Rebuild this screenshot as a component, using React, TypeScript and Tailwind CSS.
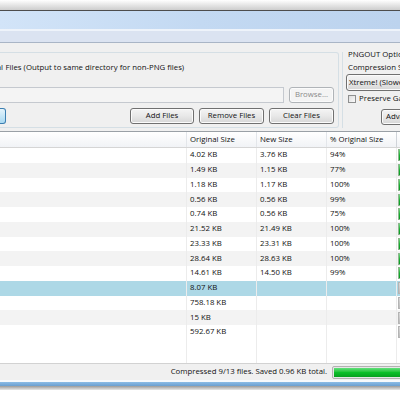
const rows: [string, string, string, boolean][] = [
  ['4.02 KB', '3.76 KB', '94%', true],
  ['1.49 KB', '1.15 KB', '77%', true],
  ['1.18 KB', '1.17 KB', '100%', true],
  ['0.56 KB', '0.56 KB', '99%', true],
  ['0.74 KB', '0.56 KB', '75%', true],
  ['21.52 KB', '21.49 KB', '100%', true],
  ['23.33 KB', '23.31 KB', '100%', true],
  ['28.64 KB', '28.63 KB', '100%', true],
  ['14.61 KB', '14.50 KB', '99%', true],
  ['8.07 KB', '', '', false],
  ['758.18 KB', '', '', false],
  ['15 KB', '', '', false],
  ['592.67 KB', '', '', false],
];

function Button({ children, className = '' }: { children?: React.ReactNode; className?: string }) {
  return (
    <div
      className={`flex h-[16px] shrink-0 items-center justify-center rounded-[3px] border border-[#707070] bg-gradient-to-b from-[#f4f4f4] via-[#e8e8e8] to-[#d6d6d6] shadow-[inset_0_0_0_1px_#fbfbfb] ${className}`}
    >
      {children}
    </div>
  );
}

export default function App() {
  return (
    <div className="h-[400px] w-[400px] overflow-hidden bg-white font-['Open_Sans',sans-serif] text-[7.8px] leading-none text-[#111]">
      {/* window frame */}
      <div className="h-[10px] bg-gradient-to-b from-white to-[#cdcdcd]" />
      <div className="h-px bg-[#4d4d4d]" />
      <div className="h-[18px] bg-gradient-to-r from-[#d2e4f8] via-[#c3d9f2] to-[#bcd3ee]" />
      <div className="h-[2px] bg-[#eef3fa]" />
      <div className="h-[11px] bg-[#dbe3f1]" />
      <div className="h-px bg-[#a9b5c6]" />

      <div className="bg-[#f0f0f0]">
        {/* options panel */}
        <div className="flex h-[88px] pt-[9px]">
          <div className="flex h-[76px] w-[339px] shrink-0 flex-col rounded-tr-[3px] rounded-br-[3px] border-y border-r border-[#d5dfe5] pr-[4px]">
            <div className="mt-[10px] flex h-[9px] items-center whitespace-nowrap">
              <div className="flex w-[3px] justify-end">
                <span>Overwrite Original</span>
              </div>
              <span className="ml-[2.5px]">Files (Output to same directory for non-PNG files)</span>
            </div>
            <div className="mt-[15px] flex h-[16px] gap-[5px]">
              <div className="h-[16px] w-[284px] border-y border-r border-[#c5c9cf] bg-[#f4f4f4]" />
              <Button className="w-[45px] border-[#b0b4b8] bg-none bg-[#f4f4f4] text-[#8a8a8a]">Browse...</Button>
            </div>
            <div className="mt-[5px] flex h-[16px] gap-[5px]">
              <div className="h-[16px] w-[6px] rounded-r-[3px] border-y border-r border-[#3c7fb1] bg-gradient-to-b from-[#e5f4fc] to-[#a9d9f2]" />
              <div className="flex-1" />
              <Button className="w-[64px]">Add Files</Button>
              <Button className="w-[65px]">Remove Files</Button>
              <Button className="w-[65px]">Clear Files</Button>
            </div>
          </div>
          <div className="ml-[3px] flex h-[76px] w-[120px] shrink-0 flex-col whitespace-nowrap border-l border-[#d5dfe5] pl-[3px]">
            <div className="-mt-[1px] ml-[2px] h-[9px]">PNGOUT Options</div>
            <div className="mt-[4px] ml-[2px] h-[9px]">Compression Strategy:</div>
            <Button className="mt-[1px] h-[17px] w-[90px] justify-start pl-[2px]">Xtreme! (Slowest)</Button>
            <div className="mt-[4px] flex items-center gap-[3px] pl-[2px]">
              <div className="h-[8px] w-[8px] border border-[#8e8f8f] bg-gradient-to-br from-[#dcdcdc] to-[#fbfbfb]" />
              <span>Preserve Gamma</span>
            </div>
            <div className="mt-[6px] flex pl-[35px]">
              <Button className="w-[60px] justify-start pl-[4px]">Advanced...</Button>
            </div>
          </div>
        </div>

        {/* file list */}
        <div className="h-[232px] border-t border-[#9aa0a6] bg-white">
          <div className="grid h-[16px] grid-cols-[187px_70px_70px_70px_1fr] border-b border-[#d5d5d5] bg-gradient-to-b from-white to-[#f1f3f6]">
            <div className="border-r border-[#e3e6ea]" />
            <div className="flex items-center border-r border-[#e3e6ea] pl-[3px]">Original Size</div>
            <div className="flex items-center border-r border-[#e3e6ea] pl-[3px]">New Size</div>
            <div className="flex items-center border-r border-[#d0d4d9] pl-[3px]">% Original Size</div>
            <div className="flex items-center pl-[3px]">Progress</div>
          </div>
          {rows.map(([orig, next, pct, done], i) => {
            const selected = i === 9;
            const bg = selected ? 'bg-[#add8e6]' : i % 2 === 1 ? 'bg-[#f3f3f3]' : 'bg-white';
            return (
              <div key={i} className={`grid h-[14.75px] grid-cols-[187px_70px_70px_70px_1fr] ${bg}`}>
                <div className="border-r border-[#ececec]" />
                <div className="flex items-center border-r border-[#ececec] pl-[3px]">{orig}</div>
                <div className="flex items-center border-r border-[#ececec] pl-[3px]">{next}</div>
                <div className="flex items-center border-r border-[#ececec] pl-[3px]">{pct}</div>
                <div className="flex items-center pl-[1px]">
                  <div
                    className={`h-[12px] w-[40px] border ${
                      done
                        ? 'border-[#8fb58f] bg-gradient-to-b from-[#6ad77d] via-[#13b12f] to-[#0a9a22]'
                        : 'border-[#b4b4b4] bg-gradient-to-b from-[#d8d8d8] to-[#bdbdbd]'
                    }`}
                  />
                </div>
              </div>
            );
          })}
          <div className="grid h-[23px] grid-cols-[187px_70px_70px_70px_1fr]">
            <div className="border-r border-[#ececec]" />
            <div className="border-r border-[#ececec]" />
            <div className="border-r border-[#ececec]" />
            <div className="border-r border-[#ececec]" />
            <div />
          </div>
        </div>

        {/* status bar */}
        <div className="flex h-[17px] items-center border-t border-[#d2d2d2] whitespace-nowrap">
          <div className="w-[327px] shrink-0 text-right">Compressed 9/13 files. Saved 0.96 KB total.</div>
          <div className="ml-[5px] h-[13px] w-[90px] shrink-0 rounded-[2px] border border-[#b2b2b2] bg-[#e6e6e6] p-px">
            <div className="h-full w-full bg-gradient-to-b from-[#5fe07a] via-[#0cc02a] to-[#08a01f]" />
          </div>
        </div>
      </div>

      <div className="h-[2px] bg-[#f7f9fc]" />
      <div className="h-[4px] bg-gradient-to-b from-[#8cbce6] to-[#6b9fd0]" />
      <div className="h-[4px] bg-gradient-to-b from-[#9a9a9a] to-[#e8e8e8]" />
    </div>
  );
}
